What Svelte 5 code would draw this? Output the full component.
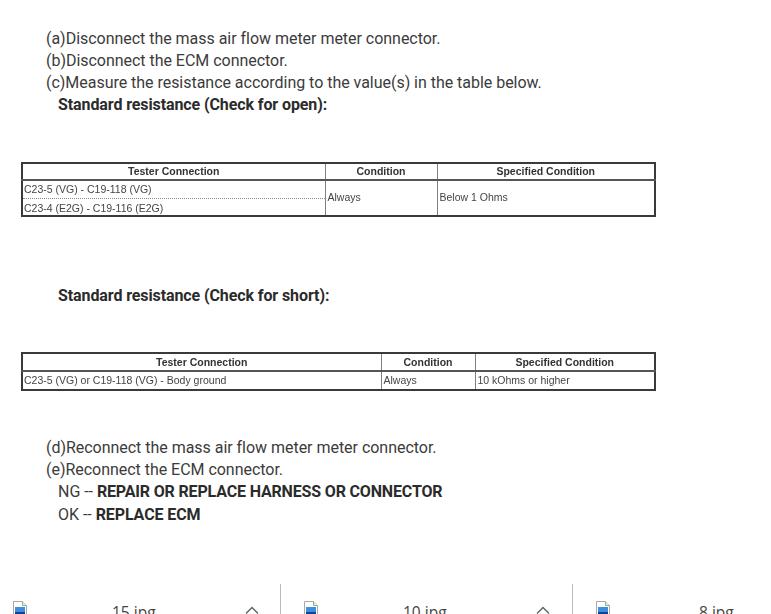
<script>
  const downloads = [
    { name: '15.jpg', chevron: true },
    { name: '10.jpg', chevron: true },
    { name: '8.jpg', chevron: false }
  ];
</script>

<div class="page">
  <div class="steps">
    <p>(a)Disconnect the mass air flow meter meter connector.</p>
    <p>(b)Disconnect the ECM connector.</p>
    <p>(c)Measure the resistance according to the value(s) in the table below.</p>
    <p class="sub"><strong>Standard resistance (Check for open):</strong></p>
  </div>

  <table class="open">
    <colgroup>
      <col style="width: 303px" />
      <col style="width: 112px" />
      <col />
    </colgroup>
    <thead>
      <tr>
        <th>Tester Connection</th>
        <th>Condition</th>
        <th>Specified Condition</th>
      </tr>
    </thead>
    <tbody>
      <tr>
        <td>C23-5 (VG) - C19-118 (VG)</td>
        <td rowspan="2">Always</td>
        <td rowspan="2">Below 1 Ohms</td>
      </tr>
      <tr>
        <td>C23-4 (E2G) - C19-116 (E2G)</td>
      </tr>
    </tbody>
  </table>

  <p class="sub short"><strong>Standard resistance (Check for short):</strong></p>

  <table class="shorted">
    <colgroup>
      <col style="width: 359px" />
      <col style="width: 94px" />
      <col />
    </colgroup>
    <thead>
      <tr>
        <th>Tester Connection</th>
        <th>Condition</th>
        <th>Specified Condition</th>
      </tr>
    </thead>
    <tbody>
      <tr>
        <td>C23-5 (VG) or C19-118 (VG) - Body ground</td>
        <td>Always</td>
        <td>10 kOhms or higher</td>
      </tr>
    </tbody>
  </table>

  <div class="steps after">
    <p>(d)Reconnect the mass air flow meter meter connector.</p>
    <p>(e)Reconnect the ECM connector.</p>
    <p class="sub">NG -- <strong class="caps">REPAIR OR REPLACE HARNESS OR CONNECTOR</strong></p>
    <p class="sub last">OK -- <strong>REPLACE ECM</strong></p>
  </div>

  <div class="downloads">
    {#each downloads as item}
      <div class="item">
        <svg class="file" width="14" height="18" viewBox="0 0 14 18">
          <path d="M.5.5h9l4 4v13H.5z" fill="#fff" stroke="#a9a9a9" />
          <path d="M9.5.5v4h4" fill="#e8f3e4" stroke="#8fb08a" />
          <rect x="2" y="6" width="10" height="11" fill="#3d8fe0" />
          <rect x="2" y="11" width="10" height="6" fill="#17408f" />
        </svg>
        <span class="name">{item.name}</span>
        {#if item.chevron}
          <svg class="chevron" width="14" height="8" viewBox="0 0 14 8">
            <path d="M1 7.5 7 1.5l6 6" fill="none" stroke="#5f6b66" stroke-width="1.5" />
          </svg>
        {/if}
      </div>
    {/each}
  </div>
</div>

<style>
  :global(body) {
    margin: 0;
    background: #fff;
  }

  .page {
    position: relative;
    height: 614px;
    overflow: hidden;
    font-family: Roboto, sans-serif;
    font-size: 16px;
    line-height: 22px;
    color: #3b3b3b;
    letter-spacing: -0.03px;
  }

  p {
    margin: 0;
  }

  strong {
    font-weight: 700;
    color: #2b2b2b;
    letter-spacing: -0.1px;
  }

  .caps {
    letter-spacing: -0.16px;
  }

  .steps {
    padding: 28px 0 0 46px;
  }

  .sub {
    padding-left: 12px;
  }

  .last {
    margin-top: 1px;
  }

  .short {
    margin: 68px 0 0 46px;
  }

  table {
    width: 635px;
    margin-left: 21px;
    border-collapse: collapse;
    table-layout: fixed;
    border: 2px solid #3a3a3a;
    font-family: 'Liberation Sans', Arial, sans-serif;
    font-size: 10.5px;
    line-height: 13px;
    color: #444;
    letter-spacing: 0;
    filter: blur(0.4px);
  }

  .open {
    margin-top: 46px;
  }

  .shorted {
    margin-top: 45px;
  }

  th {
    height: 17px;
    padding: 0 0 1px;
    box-sizing: border-box;
    font-weight: 700;
    color: #333;
    text-align: center;
    border-bottom: 2px solid #555;
    border-left: 1px solid #808080;
  }

  td {
    height: 18px;
    padding: 0 1px 1px 2px;
    box-sizing: border-box;
    border-left: 1px solid #808080;
    border-bottom: 1px dotted #888;
  }

  td:first-child {
    padding-left: 1px;
  }

  .open tbody tr:first-child td:first-child {
    padding-bottom: 0;
  }

  .open tbody tr + tr td {
    padding-top: 3px;
    padding-bottom: 0;
  }

  .shorted th {
    height: 18px;
    padding: 1px 0 0;
  }

  .shorted td {
    height: 19px;
  }

  .after {
    padding-top: 46px;
  }

  .downloads {
    position: absolute;
    left: 0;
    right: 0;
    top: 584px;
    display: flex;
    height: 40px;
    font-family: 'Open Sans', sans-serif;
    font-size: 15.5px;
    color: #444;
    letter-spacing: 0;
  }

  .item {
    position: relative;
    flex: 0 0 292px;
    box-sizing: border-box;
    height: 40px;
    border-right: 1px solid #bbb;
  }

  .item:first-child {
    flex-basis: 281px;
  }

  .item:last-child {
    border-right: 0;
  }

  .file {
    position: absolute;
    left: 23px;
    top: 17px;
  }

  .item:first-child .file {
    left: 13px;
  }

  .name {
    position: absolute;
    left: 122px;
    top: 17px;
  }

  .item:first-child .name {
    left: 112px;
  }

  .item:last-child .name {
    left: 126px;
  }

  .chevron {
    position: absolute;
    left: 255px;
    top: 22px;
  }

  .item:first-child .chevron {
    left: 245px;
  }
</style>
